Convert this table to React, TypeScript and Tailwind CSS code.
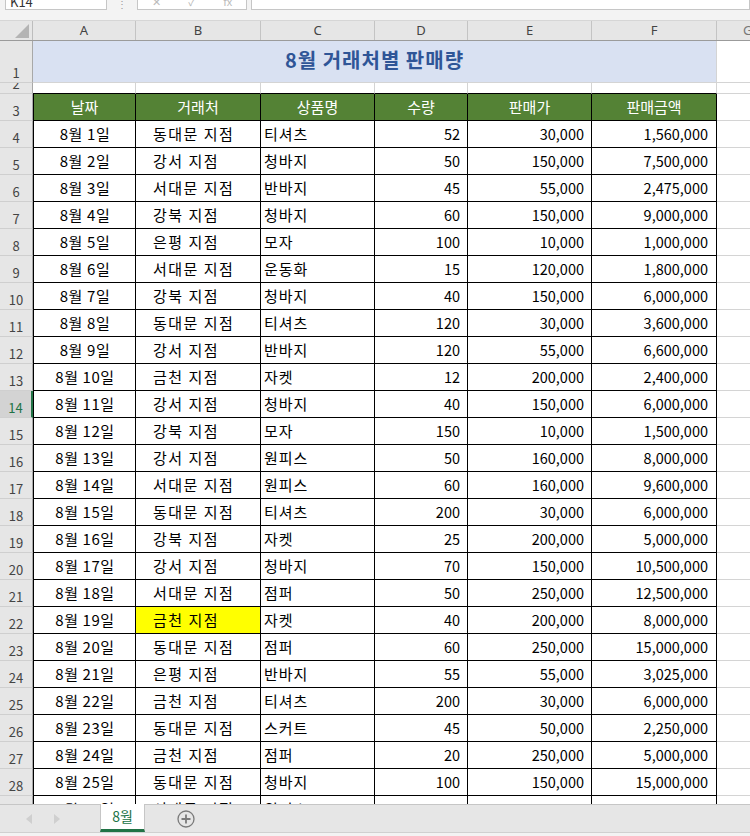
import React from 'react';

const FONT = { fontFamily: '"Noto Sans CJK KR", "Noto Sans", sans-serif' };

const rows: [string, string, string, string, string, string][] = [
  ['8월 1일', '동대문 지점', '티셔츠', '52', '30,000', '1,560,000'],
  ['8월 2일', '강서 지점', '청바지', '50', '150,000', '7,500,000'],
  ['8월 3일', '서대문 지점', '반바지', '45', '55,000', '2,475,000'],
  ['8월 4일', '강북 지점', '청바지', '60', '150,000', '9,000,000'],
  ['8월 5일', '은평 지점', '모자', '100', '10,000', '1,000,000'],
  ['8월 6일', '서대문 지점', '운동화', '15', '120,000', '1,800,000'],
  ['8월 7일', '강북 지점', '청바지', '40', '150,000', '6,000,000'],
  ['8월 8일', '동대문 지점', '티셔츠', '120', '30,000', '3,600,000'],
  ['8월 9일', '강서 지점', '반바지', '120', '55,000', '6,600,000'],
  ['8월 10일', '금천 지점', '자켓', '12', '200,000', '2,400,000'],
  ['8월 11일', '강서 지점', '청바지', '40', '150,000', '6,000,000'],
  ['8월 12일', '강북 지점', '모자', '150', '10,000', '1,500,000'],
  ['8월 13일', '강서 지점', '원피스', '50', '160,000', '8,000,000'],
  ['8월 14일', '서대문 지점', '원피스', '60', '160,000', '9,600,000'],
  ['8월 15일', '동대문 지점', '티셔츠', '200', '30,000', '6,000,000'],
  ['8월 16일', '강북 지점', '자켓', '25', '200,000', '5,000,000'],
  ['8월 17일', '강서 지점', '청바지', '70', '150,000', '10,500,000'],
  ['8월 18일', '서대문 지점', '점퍼', '50', '250,000', '12,500,000'],
  ['8월 19일', '금천 지점', '자켓', '40', '200,000', '8,000,000'],
  ['8월 20일', '동대문 지점', '점퍼', '60', '250,000', '15,000,000'],
  ['8월 21일', '은평 지점', '반바지', '55', '55,000', '3,025,000'],
  ['8월 22일', '금천 지점', '티셔츠', '200', '30,000', '6,000,000'],
  ['8월 23일', '동대문 지점', '스커트', '45', '50,000', '2,250,000'],
  ['8월 24일', '금천 지점', '점퍼', '20', '250,000', '5,000,000'],
  ['8월 25일', '동대문 지점', '청바지', '100', '150,000', '15,000,000'],
  ['8월 26일', '서대문 지점', '원피스', '30', '160,000', '4,800,000'],
];

function RowHead({ n, h, active }: { n: number; h: string; active?: boolean }) {
  return (
    <div
      className={`${h} w-[33px] shrink-0 flex items-end justify-center pb-[3px] text-[13px] leading-none border-b border-[#cfcfcf] ${
        active
          ? 'bg-[#d3d3d3] text-[#217346] border-r-2 border-r-[#217346]'
          : 'bg-[#e6e6e6] text-[#444] border-r border-r-[#a8a8a8]'
      }`}
    >
      {n}
    </div>
  );
}

export default function App() {
  return (
    <div className="w-[750px] h-[836px] bg-[#f3f3f3] flex flex-col overflow-hidden" style={FONT}>
      {/* formula bar, mostly scrolled off */}
      <div className="h-[10px] flex items-end overflow-hidden">
        <div className="ml-[5px] w-[102px] h-[24px] bg-white border border-[#c6c6c6] text-[13px] text-[#333] pl-1 leading-[30px]">K14</div>
        <div className="w-[30px] h-[10px] flex justify-center items-end pb-[1px] text-[#999] text-[10px] leading-none">⋮</div>
        <div className="w-[110px] h-[24px] bg-white border border-[#c6c6c6] flex items-end justify-around text-[11px] text-[#bbb] leading-none pb-[2px]">
          <span>✕</span><span>✓</span><span>fx</span>
        </div>
        <div className="ml-[4px] flex-1 h-[24px] bg-white border border-[#c6c6c6]" />
      </div>
      <div className="h-[10px]" />

      {/* column headers */}
      <div className="h-[21px] flex border-t border-[#d6d6d6] border-b border-b-[#9b9b9b] bg-[#e6e6e6] text-[13px] text-[#444]" style={{ fontFamily: '"Noto Sans", sans-serif' }}>
        <div className="w-[33px] shrink-0 border-r border-[#bdbdbd] relative">
          <svg className="absolute right-[3px] bottom-[2px]" width="14" height="14" viewBox="0 0 14 14">
            <polygon points="14,0 14,14 0,14" fill="#b4b4b4" />
          </svg>
        </div>
        {[
          ['A', 'w-[103px]'],
          ['B', 'w-[125px]'],
          ['C', 'w-[114px]'],
          ['D', 'w-[93px]'],
          ['E', 'w-[124px]'],
          ['F', 'w-[125px]'],
        ].map(([l, w]) => (
          <div key={l} className={`${w} shrink-0 flex items-center justify-center border-r border-[#c4c4c4]`}>
            {l}
          </div>
        ))}
        <div className="flex-1 flex items-center pl-[26px] text-[#777]">G</div>
      </div>

      {/* sheet */}
      <div className="flex-1 overflow-hidden bg-white">
        {/* row 1: title */}
        <div className="flex h-[42px]">
          <RowHead n={1} h="h-[42px]" />
          <div className="w-[684px] shrink-0 bg-[#d9e1f2] border-b border-r border-[#d4d4d4] flex items-center justify-center pb-[4px] text-[20px] font-bold tracking-[1px] text-[#2f5597]">
            8월 거래처별 판매량
          </div>
          <div className="flex-1 border-b border-[#d4d4d4]" />
        </div>
        {/* row 2 */}
        <div className="flex h-[11px]">
          <div className="h-[11px] w-[33px] shrink-0 bg-[#e6e6e6] border-r border-[#a8a8a8] border-b border-b-[#cfcfcf] overflow-hidden flex justify-center text-[13px] leading-none text-[#444]">
            <span className="-mt-[6px]">2</span>
          </div>
          {['w-[103px]', 'w-[125px]', 'w-[114px]', 'w-[93px]', 'w-[124px]', 'w-[125px]'].map((w) => (
            <div key={w} className={`${w} shrink-0 border-r border-[#d4d4d4] border-b border-b-black`} />
          ))}
          <div className="flex-1 border-b border-[#d4d4d4]" />
        </div>
        {/* row 3: table header */}
        <div className="flex h-[27px]">
          <RowHead n={3} h="h-[27px]" />
          {[
            ['날짜', 'w-[103px] border-l'],
            ['거래처', 'w-[125px]'],
            ['상품명', 'w-[114px]'],
            ['수량', 'w-[93px]'],
            ['판매가', 'w-[124px]'],
            ['판매금액', 'w-[125px]'],
          ].map(([t, w]) => (
            <div
              key={t}
              className={`${w} shrink-0 bg-[#548235] text-white text-[15px] flex items-center justify-center border-r border-b border-black`}
            >
              {t}
            </div>
          ))}
          <div className="flex-1 border-b border-[#d4d4d4]" />
        </div>
        {/* data rows */}
        {rows.map((r, i) => {
          const n = i + 4;
          return (
            <div key={n} className="flex h-[27px] text-[15px] text-black">
              <RowHead n={n} h="h-[27px]" active={n === 14} />
              <div className="w-[103px] shrink-0 border-l border-r border-b border-black flex items-center justify-center tracking-[0.6px] pl-[1px]">{r[0]}</div>
              <div
                className={`w-[125px] shrink-0 border-r border-b border-black flex items-center pl-[17px] tracking-[1.5px] ${
                  n === 22 ? 'bg-[#ffff00]' : ''
                }`}
              >
                {r[1]}
              </div>
              <div className="w-[114px] shrink-0 border-r border-b border-black flex items-center pl-[3px] tracking-[1px]">{r[2]}</div>
              <div className="w-[93px] shrink-0 border-r border-b border-black flex items-center justify-end pr-[7px] text-[14.5px]">{r[3]}</div>
              <div className="w-[124px] shrink-0 border-r border-b border-black flex items-center justify-end pr-[7px] text-[14.5px]">{r[4]}</div>
              <div className="w-[125px] shrink-0 border-r border-b border-black flex items-center justify-end pr-[8px] text-[14.5px]">{r[5]}</div>
              <div className="flex-1 border-b border-[#d4d4d4]" />
            </div>
          );
        })}
      </div>

      {/* sheet tabs */}
      <div className="h-[29px] flex items-stretch bg-[#e6e6e6] border-t border-[#c6c6c6] border-b border-b-[#d0d0d0]">
        <div className="w-[100px] flex items-center">
          <svg className="ml-[26px]" width="6" height="10" viewBox="0 0 6 10">
            <polygon points="6,0 6,10 0,5" fill="#cfcfcf" />
          </svg>
          <svg className="ml-[22px]" width="6" height="10" viewBox="0 0 6 10">
            <polygon points="0,0 0,10 6,5" fill="#cfcfcf" />
          </svg>
        </div>
        <div className="-mt-px w-[45px] bg-white border-x border-[#c6c6c6] border-b-[3px] border-b-[#217346] flex items-center justify-center text-[14px] text-[#217346]">
          8월
        </div>
        <div className="flex items-center ml-[32px]">
          <svg width="18" height="18" viewBox="0 0 18 18">
            <circle cx="9" cy="9" r="8" fill="none" stroke="#7a7a7a" strokeWidth="1.3" />
            <path d="M9 4.5v9M4.5 9h9" stroke="#7a7a7a" strokeWidth="1.8" />
          </svg>
        </div>
      </div>
      <div className="h-[3px] bg-[#f3f3f3]" />
    </div>
  );
}
